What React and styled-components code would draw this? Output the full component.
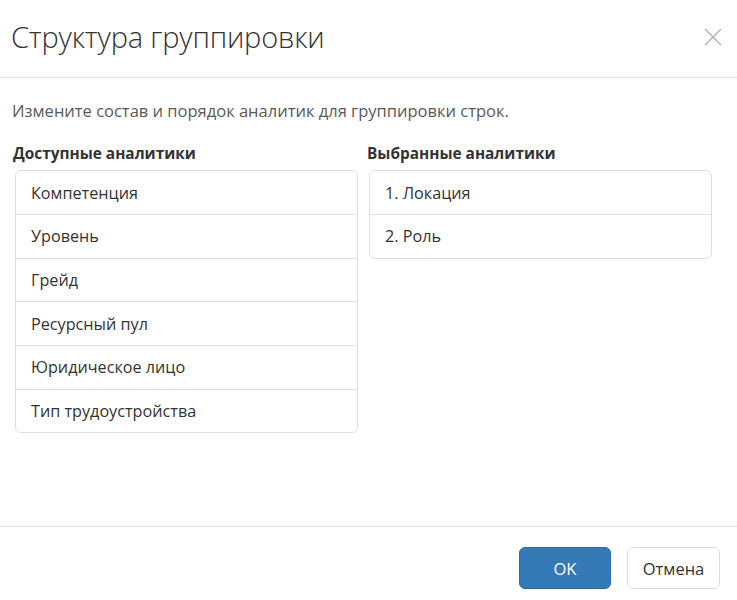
import React from "react";
import styled, { createGlobalStyle } from "styled-components";

const Global = createGlobalStyle`
  html, body { margin: 0; padding: 0; background: #fff; }
  body { font-family: "Open Sans", "Noto Sans", sans-serif; color: #333; }
  * { box-sizing: border-box; }
`;

const Dialog = styled.div`
  width: 737px;
  height: 600px;
  display: flex;
  flex-direction: column;
  background: #fff;
`;

const Header = styled.div`
  height: 78px;
  display: flex;
  align-items: center;
  justify-content: space-between;
  padding: 0 15px 0 11px;
  border-bottom: 1px solid #e5e5e5;
`;

const Title = styled.h1`
  margin: 0;
  font-size: 29px;
  font-weight: 300;
  color: #333;
  letter-spacing: -0.2px;
  line-height: 1;
  padding-bottom: 4px;
`;

const Close = styled.button`
  border: 0;
  background: none;
  padding: 0;
  width: 18px;
  height: 18px;
  display: flex;
  cursor: pointer;
  margin-top: -4px;
`;

const Body = styled.div`
  flex: 1;
  padding: 22px 15px 0 15px;
`;

const Description = styled.p`
  margin: 0 0 22px -3px;
  font-size: 16.5px;
  color: #5a5a5a;
  line-height: 22px;
`;

const Columns = styled.div`
  display: grid;
  grid-template-columns: 343px 343px;
  column-gap: 11px;
  align-items: start;
`;

const Column = styled.div`
  display: flex;
  flex-direction: column;
`;

const ColumnTitle = styled.h2`
  margin: 0 0 6px -2px;
  font-size: 15.4px;
  font-weight: 700;
  color: #333;
  line-height: 20px;
`;

const List = styled.ul`
  list-style: none;
  margin: 0;
  padding: 0;
  border: 1px solid #dedede;
  border-radius: 6px;
  overflow: hidden;
`;

const Item = styled.li`
  height: 43.6px;
  display: flex;
  align-items: center;
  padding: 0 15px;
  font-size: 16.2px;
  color: #333;
  border-top: 1px solid #e2e2e2;
  &:first-child { border-top: 0; height: 43.2px; }
`;

const Footer = styled.div`
  height: 74px;
  border-top: 1px solid #e5e5e5;
  display: flex;
  justify-content: flex-end;
  align-items: flex-start;
  gap: 16px;
  padding: 20px 17px 0 0;
`;

const Button = styled.button`
  height: 42px;
  padding: 0;
  width: ${(p) => (p.$primary ? "92px" : "93px")};
  border-radius: 6px;
  font-family: inherit;
  font-size: 16.5px;
  cursor: pointer;
  border: 1px solid ${(p) => (p.$primary ? "#2e6da4" : "#dcdcdc")};
  background: ${(p) => (p.$primary ? "#337ab7" : "#fff")};
  color: ${(p) => (p.$primary ? "#fff" : "#333")};
`;

const available = [
  "Компетенция",
  "Уровень",
  "Грейд",
  "Ресурсный пул",
  "Юридическое лицо",
  "Тип трудоустройства",
];
const selected = ["Локация", "Роль"];

export default function App() {
  return (
    <>
      <Global />
      <Dialog>
        <Header>
          <Title>Структура группировки</Title>
          <Close aria-label="Закрыть">
            <svg width="18" height="18" viewBox="0 0 18 18">
              <path d="M1 1L17 17M17 1L1 17" stroke="#b3b3b3" strokeWidth="1.4" fill="none" />
            </svg>
          </Close>
        </Header>
        <Body>
          <Description>Измените состав и порядок аналитик для группировки строк.</Description>
          <Columns>
            <Column>
              <ColumnTitle>Доступные аналитики</ColumnTitle>
              <List>
                {available.map((a) => (
                  <Item key={a}>{a}</Item>
                ))}
              </List>
            </Column>
            <Column>
              <ColumnTitle>Выбранные аналитики</ColumnTitle>
              <List>
                {selected.map((a, i) => (
                  <Item key={a}>{`${i + 1}. ${a}`}</Item>
                ))}
              </List>
            </Column>
          </Columns>
        </Body>
        <Footer>
          <Button $primary>OK</Button>
          <Button>Отмена</Button>
        </Footer>
      </Dialog>
    </>
  );
}
